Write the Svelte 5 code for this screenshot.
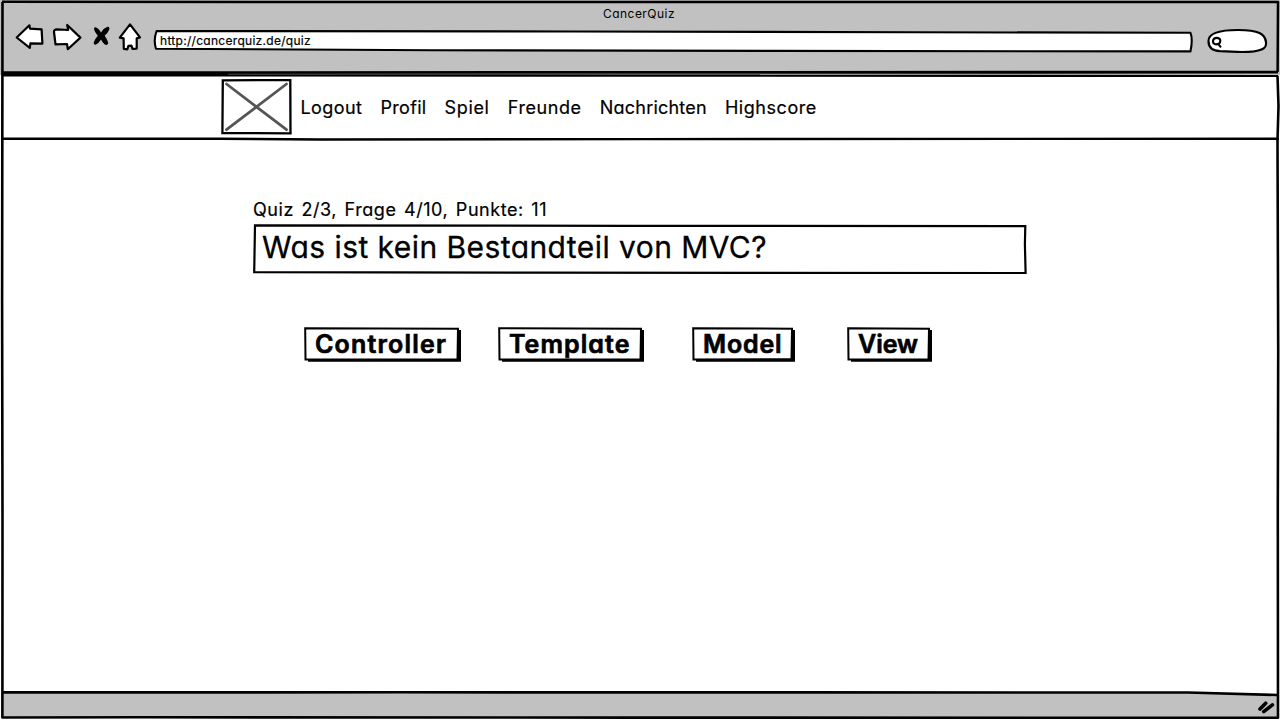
<script>
  const nav = [
    { label: 'Logout', width: 62 },
    { label: 'Profil', width: 46 },
    { label: 'Spiel', width: 45 },
    { label: 'Freunde', width: 74 },
    { label: 'Nachrichten', width: 107 },
    { label: 'Highscore', width: 92 },
  ];
  const answers = [
    { label: 'Controller', width: 132, box: 157, gap: 37 },
    { label: 'Template', width: 121.5, box: 146, gap: 48 },
    { label: 'Model', width: 79.5, box: 103, gap: 52 },
    { label: 'View', width: 60, box: 85, gap: 0 },
  ];

  // Spreads the letters so that a label fills the given width.
  function track(node, width) {
    const apply = () => {
      node.style.letterSpacing = '0px';
      const natural = node.getBoundingClientRect().width;
      node.style.letterSpacing = (width - natural) / node.textContent.length + 'px';
    };
    apply();
    document.fonts.ready.then(apply);
  }
</script>

<div class="browser">
  <header class="chrome">
    <div class="title"><span use:track={72}>CancerQuiz</span></div>
    <div class="tools">
      <svg class="icons" width="140" height="34" viewBox="0 20 140 34" aria-hidden="true">
        <g fill="#fff" stroke="#000" stroke-width="2.2" stroke-linejoin="round" stroke-linecap="round">
          <path d="M16.7 37.5 29.4 25.3 30 28.6 41.6 29.4 42.4 43.6 30.4 43.4 29.8 47.8Z" />
          <path d="M80.4 37.6 67.2 25 68.2 30 57 29.4Q53.8 29.6 54 32L55.5 44.4 67 44 67.8 49.2Z" />
          <path d="M130 24.4 119.8 37.6 123.6 38.4 123.8 48.8 127.4 49.3 128.4 45.8 131.4 45.7 132.6 49 136.7 48.6 136.7 38.4 140 37.4Z" />
        </g>
        <path d="M95.6 27.2Q98.5 28 101 32.5 103.5 28.2 107.4 26.8 109.8 26.4 109.3 29.4 107.8 33 104.6 35.8 107.6 39.6 108.3 43 107.4 45.8 104.8 44.6 102.4 42.8 101 39.6 98.8 43.4 96 44.6 93.4 45 93.7 42.4 95 39 97.8 35.8 94.8 32.4 94 29.2 93.8 26.8 95.6 27.2Z" />
      </svg>
      <div class="address">
        <svg class="frame" viewBox="0 0 1040 24" aria-hidden="true">
          <path d="M3.6 2 420 2.5 760 3.2 1037.5 3.8Q1040 10 1037.5 22.4L620 21.9 280 21.2 3 19.8Q.2 11 3.6 2Z" fill="#fff" stroke="#000" stroke-width="2.1" stroke-linejoin="round" />
        </svg>
        <span use:track={151}>http://cancerquiz.de/quiz</span>
      </div>
      <svg class="search" width="62" height="28" viewBox="1206 27 62 28" aria-hidden="true">
        <path d="M1208.5 41C1208.5 34 1217 30 1238 30 1259 30 1265 34 1266 42 1266.7 48 1263 50 1254 51.4 1240 53 1232 51.2 1220 51.2 1212 50.8 1208.5 47 1208.5 41Z" fill="#fff" stroke="#000" stroke-width="2.2" />
        <path d="M1220 42.8C1216 46 1212.5 43.9 1213 40.5 1214 37 1219.7 37 1220.4 40.6Q1220.4 43 1218.5 44.3M1217.8 43.6 1221 47.4" fill="none" stroke="#000" stroke-width="2.1" />
      </svg>
    </div>
  </header>

  <nav>
    <svg class="logo" width="71" height="56" viewBox="0 0 71 56" aria-hidden="true">
      <path d="M1.8 1.4 69.3 1 69.5 54.3 1.4 54Z" fill="#fff" stroke="#000" stroke-width="2.3" />
      <path d="M5.5 5 65.5 50.7M65.5 5 5.5 50.7" stroke="#555" stroke-width="2.8" stroke-linecap="round" />
    </svg>
    {#each nav as item}
      <a href="#{item.label}" style:width="{item.width}px"><span use:track={item.width}>{item.label}</span></a>
    {/each}
  </nav>

  <main>
    <p class="status"><span use:track={294}>Quiz 2/3, Frage 4/10, Punkte: 11</span></p>
    <div class="question">
      <svg class="frame" viewBox="0 0 774 50" aria-hidden="true">
        <path d="M2 1.4 380 1.8 772.3 2.1 771.9 20 772.6 49 500 48.9 280 48.6 1.2 48.2Z" fill="#fff" stroke="#000" stroke-width="2.2" />
      </svg>
      <span use:track={505}>Was ist kein Bestandteil von MVC?</span>
    </div>
    <div class="answers">
      {#each answers as a}
        <button style:width="{a.box}px" style:margin-right="{a.gap}px">
          <svg class="frame" viewBox="0 0 {a.box} 35" aria-hidden="true">
            <path d="M4 31H{a.box - 4}V3.1H{a.box}V34.7H4Z" />
            <path d="M1.2 1.3 {a.box - 3} 1.7 {a.box - 3.5} 32.2 1.5 32.4Z" fill="#fff" stroke="#000" stroke-width="2" />
          </svg>
          <span use:track={a.width}>{a.label}</span>
        </button>
      {/each}
    </div>
  </main>

  <footer></footer>

  <svg class="outline" viewBox="0 0 1280 720" aria-hidden="true">
    <path d="M1 692.4 400 691.9 1188 691.9 1278 694.7V718H1Z" fill="#c1c1c1" />
    <g fill="none" stroke="#000" stroke-linejoin="round">
      <path d="M2 1.8 640 2 1278 2 1277.6 72" stroke-width="2.5" />
      <path d="M2.5 2 2.1 300 2.5 520 2.4 717.5 140 717.3 640 717.6 1278 717.8 1277.8 510 1278.2 350 1277.5 140 1278.5 106 1277.5 75.8" stroke-width="2.6" />
      <path d="M2 72.7 640 72.3 1278 72.2" stroke-width="2.8" />
      <path d="M2 74.2H228" stroke-width="1.6" />
      <path d="M228 74.2H760" stroke="#444" stroke-width="1" />
      <path d="M2 75.4 640 75.7 1278 76" stroke-width="2.1" />
      <path d="M2 138.7 220 138.8 320 139.5 640 139.1 1279 138.7" stroke-width="2.4" />
      <path d="M2 692.4 400 692.3 800 692.4 1188 692.5 1278 695" stroke-width="2.6" />
    </g>
    <path d="M1260 709 1265.7 703.2M1263.7 711.6 1272.4 704.8" stroke="#000" stroke-width="3.6" stroke-linecap="round" />
  </svg>
</div>

<style>
  :global(body) { margin: 0; background: #fff; }
  .browser {
    position: relative; width: 1280px; height: 720px; overflow: hidden;
    display: flex; flex-direction: column; background: #fff; color: #000;
    font-family: Inter, "Liberation Sans", sans-serif;
    font-feature-settings: "cv11" 1, "calt" 0;
  }
  span { white-space: pre; }
  .chrome { height: 75px; background: #c1c1c1; display: flex; flex-direction: column; }
  .title { height: 20px; line-height: 28px; font-size: 12px; padding-left: 603px; }
  .tools { display: flex; height: 34px; }
  .icons { margin-right: 13px; width: 140px; flex: none; overflow: visible; }
  .address {
    position: relative; width: 1040px; height: 24px; margin-top: 9px;
    line-height: 24px; font-size: 12px; flex: none;
  }
  .address span { position: relative; display: inline-block; margin-left: 7px; -webkit-text-stroke: .2px #000; }
  .search { margin: 7px 0 0 13px; }
  .frame { position: absolute; left: 0; top: 0; width: 100%; height: 100%; overflow: visible; }
  nav {
    height: 64px; box-sizing: border-box; padding: 4px 0 0 221px;
    display: flex; gap: 18.1px; line-height: 58px; font-size: 18px;
  }
  .logo { margin-right: -9.7px; flex: none; }
  nav a { color: #000; text-decoration: none; flex: none; -webkit-text-stroke: .2px #000; }
  main { flex: 1; padding: 60px 0 0 253px; }
  .status { margin: 0; height: 25px; line-height: 22px; font-size: 18px; word-spacing: 2px; -webkit-text-stroke: .2px #000; }
  .question { position: relative; width: 774px; height: 50px; line-height: 46px; font-size: 30px; }
  .question span { position: relative; display: inline-block; margin-left: 9px; -webkit-text-stroke: .3px #000; }
  .answers { display: flex; margin: 53px 0 0 51px; }
  button {
    position: relative; flex: none; height: 35px; padding: 0 0 0 11px; border: 0; background: none;
    color: #000; font: 600 25px/31px Inter, sans-serif; text-align: left;
    font-feature-settings: "cv11" 1, "calt" 0;
  }
  button span { position: relative; display: inline-block; -webkit-text-stroke: .7px #000; stroke-linejoin: round; }
  footer { height: 28px; }
  .outline { position: absolute; inset: 0; pointer-events: none; }
</style>
